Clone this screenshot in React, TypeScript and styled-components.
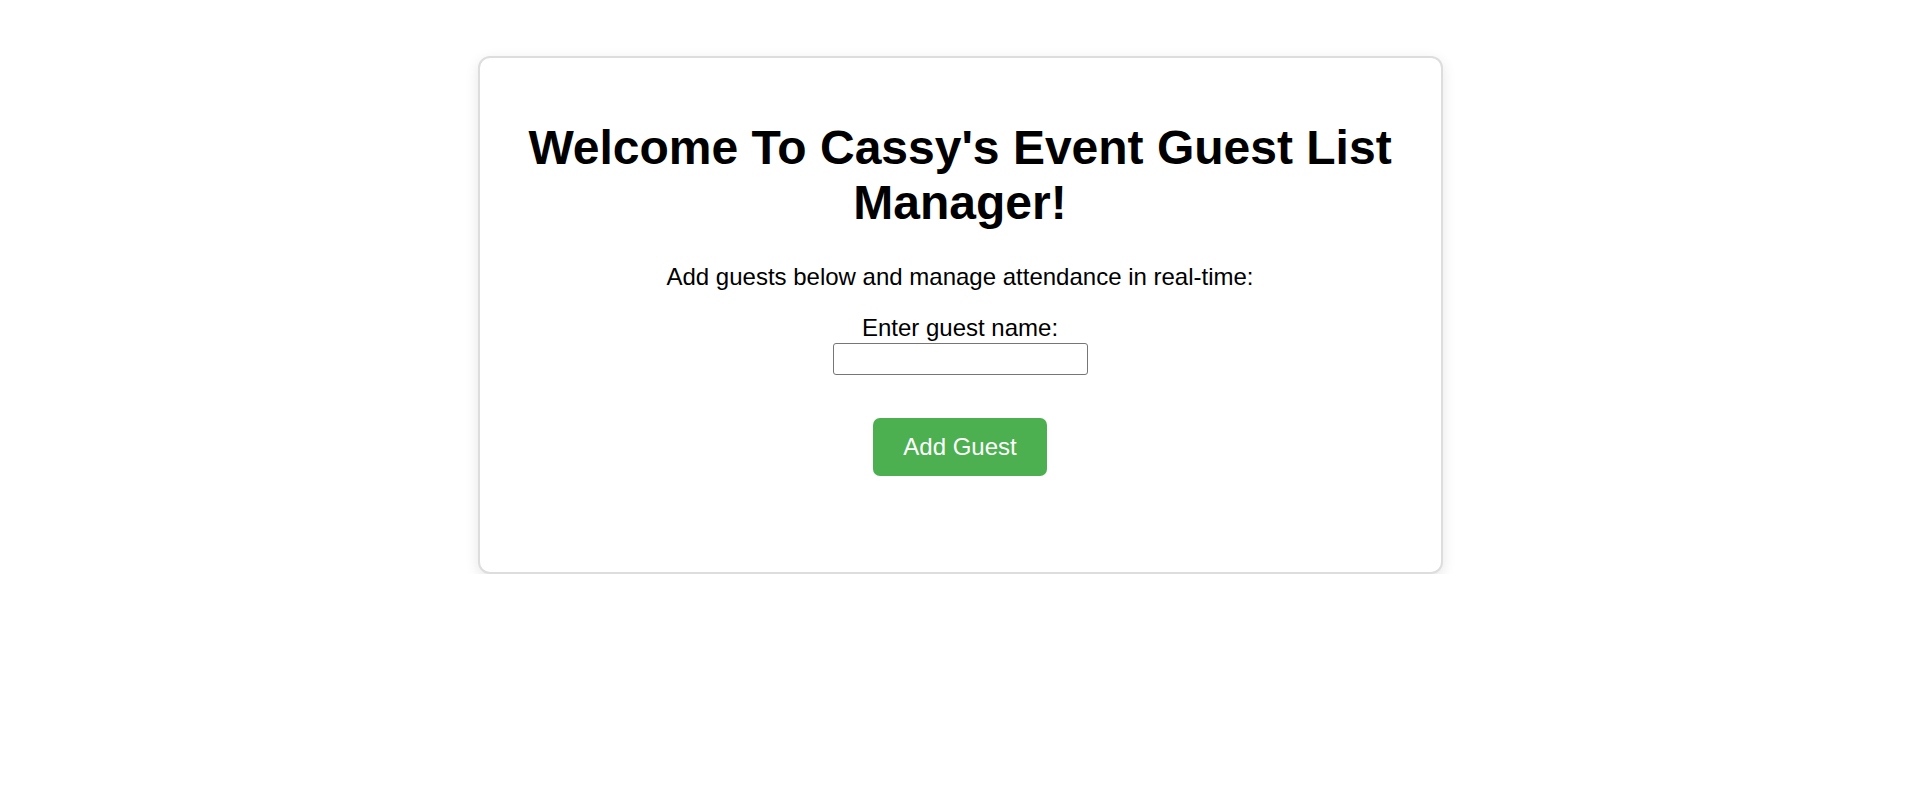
import React, { useState } from "react";
import styled, { createGlobalStyle } from "styled-components";

const GlobalStyle = createGlobalStyle`
  html, body {
    margin: 0;
    padding: 0;
    background: #ffffff;
    font-family: "Liberation Sans", Arial, sans-serif;
    color: #000000;
  }
`;

const Page = styled.div`
  display: flex;
  justify-content: center;
  padding-top: 56px;
`;

const Card = styled.main`
  box-sizing: border-box;
  width: 965px;
  padding: 62px 40px 96px;
  border: 2px solid #dddddd;
  border-radius: 12px;
  background: #ffffff;
  box-shadow: 0 4px 14px rgba(0, 0, 0, 0.1);
  display: flex;
  flex-direction: column;
  align-items: center;
  text-align: center;
`;

const Title = styled.h1`
  margin: 0;
  font-size: 48px;
  line-height: 55px;
  font-weight: 700;
`;

const Subtitle = styled.p`
  margin: 33px 0 0;
  font-size: 24px;
  line-height: 28px;
`;

const Label = styled.label`
  margin-top: 23px;
  font-size: 24px;
  line-height: 28px;
`;

const Input = styled.input`
  box-sizing: border-box;
  margin-top: 1px;
  width: 255px;
  height: 32px;
  border: 1px solid #767676;
  border-radius: 3px;
  padding: 2px 6px;
  font-family: "Liberation Sans", Arial, sans-serif;
  font-size: 18px;
`;

const Button = styled.button`
  margin-top: 43px;
  padding: 15px 30px;
  border: none;
  border-radius: 7px;
  background: #4caf50;
  color: #ffffff;
  font-family: "Liberation Sans", Arial, sans-serif;
  font-size: 24px;
  line-height: 28px;
  cursor: pointer;
`;

export default function App() {
  const [name, setName] = useState("");
  return (
    <>
      <GlobalStyle />
      <Page>
        <Card>
          <Title>Welcome To Cassy's Event Guest List Manager!</Title>
          <Subtitle>Add guests below and manage attendance in real-time:</Subtitle>
          <Label htmlFor="guest">Enter guest name:</Label>
          <Input id="guest" value={name} onChange={(e) => setName(e.target.value)} />
          <Button type="button">Add Guest</Button>
        </Card>
      </Page>
    </>
  );
}
